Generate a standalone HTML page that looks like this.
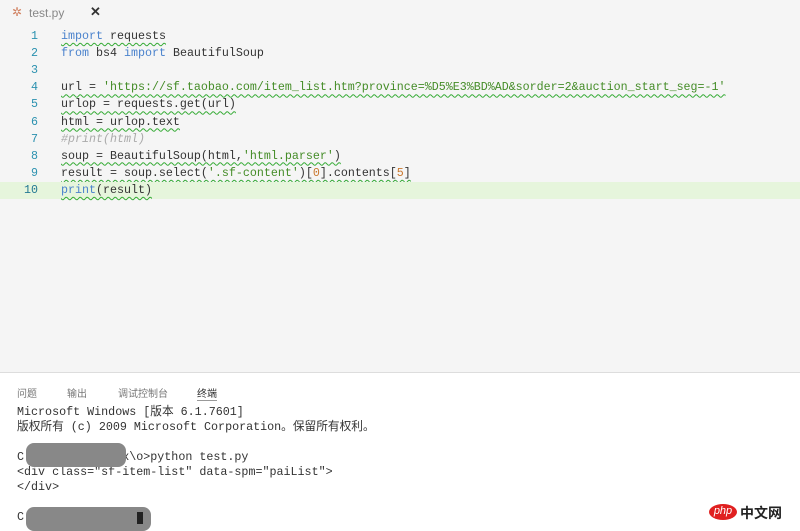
<!DOCTYPE html>
<html><head><meta charset="utf-8"><style>
body{margin:0;width:800px;height:530px;overflow:hidden;background:#fff;font-family:"Liberation Sans","Noto Sans CJK SC",sans-serif;position:relative}
.ed{position:absolute;left:0;top:0;width:800px;height:372px;background:#f5f5f5}
.tab{position:absolute;left:0;top:0;width:110px;height:25px;background:#f5f5f5;font-size:12px;color:#888}
.code{position:absolute;top:28px;left:0;font-family:"Liberation Mono",monospace;font-size:11.66px;color:#333}
.ln{position:absolute;height:17.1px;line-height:17.1px;white-space:pre;width:800px}
.n{position:absolute;left:0;width:38px;text-align:right;color:#2b91af}
.t{position:absolute;left:61px}
.k{color:#4b83cd}
.s{color:#448c27}
.sq{text-decoration:underline wavy #3a3;text-decoration-thickness:1px;text-underline-offset:3px}
.c{color:#aaa;font-style:italic}
.num{color:#c9782e}
.panel{position:absolute;top:372px;left:0;width:800px;height:158px;border-top:1px solid #ddd;background:#fff}
.pt{position:absolute;top:12px;font-size:10px;color:#777}
.term{position:absolute;left:17px;top:32px;font-family:"Liberation Mono","Noto Sans CJK SC",monospace;font-size:11.7px;line-height:15px;color:#333;white-space:pre}
</style></head><body>
<div class="ed">
<div class="tab"><span style="position:absolute;left:12px;top:5px;color:#d08060;font-size:12px">✲</span><span style="position:absolute;left:29px;top:6px">test.py</span><span style="position:absolute;left:90px;top:4px;color:#333;font-size:13px;font-weight:bold">✕</span></div>
<div class="code">
<div class="ln" style="top:0"><span class="n">1</span><span class="t sq"><span class="k">import</span> requests</span></div>
<div class="ln" style="top:17.1px"><span class="n">2</span><span class="t"><span class="k">from</span> bs4 <span class="k">import</span> BeautifulSoup</span></div>
<div class="ln" style="top:34.2px"><span class="n">3</span></div>
<div class="ln" style="top:51.3px"><span class="n">4</span><span class="t sq">url = <span class="s">'https://sf.taobao.com/item_list.htm?province=%D5%E3%BD%AD&amp;sorder=2&amp;auction_start_seg=-1'</span></span></div>
<div class="ln" style="top:68.4px"><span class="n">5</span><span class="t sq">urlop = requests.get(url)</span></div>
<div class="ln" style="top:85.5px"><span class="n">6</span><span class="t sq">html = urlop.text</span></div>
<div class="ln" style="top:102.6px"><span class="n">7</span><span class="t c">#print(html)</span></div>
<div class="ln" style="top:119.7px"><span class="n">8</span><span class="t sq">soup = BeautifulSoup(html,<span class="s">'html.parser'</span>)</span></div>
<div class="ln" style="top:136.8px"><span class="n">9</span><span class="t sq">result = soup.select(<span class="s">'.sf-content'</span>)[<span class="num">0</span>].contents[<span class="num">5</span>]</span></div>
<div class="ln" style="top:153.9px;background:#e6f5dc"><span class="n" style="color:#237893">10</span><span class="t sq"><span class="k">print</span>(result)</span></div>
</div>
</div>
<div class="panel">
<span class="pt" style="left:17px">问题</span><span class="pt" style="left:67px">输出</span><span class="pt" style="left:118px">调试控制台</span><span class="pt" style="left:197px;color:#333;border-bottom:1px solid #999">终端</span>
<div class="term">Microsoft Windows [版本 6.1.7601]
版权所有 (c) 2009 Microsoft Corporation。保留所有权利。

C:\Users\xxxxxxx\o&gt;python test.py
&lt;div class="sf-item-list" data-spm="paiList"&gt;
&lt;/div&gt;

C</div>
<div style="position:absolute;left:26px;top:70px;width:100px;height:24px;background:#888;border-radius:8px"></div>
<div style="position:absolute;left:26px;top:134px;width:125px;height:24px;background:#888;border-radius:8px"></div>
<div style="position:absolute;left:137px;top:139px;width:6px;height:12px;background:#222"></div>
<div style="position:absolute;left:709px;top:131px;width:28px;height:16px;background:#e02020;border-radius:50%;color:#fff;font-size:11px;font-style:italic;text-align:center;line-height:15px">php</div>
<div style="position:absolute;left:740px;top:130px;font-size:14px;color:#222;font-weight:bold">中文网</div>
</div>
</body></html>
